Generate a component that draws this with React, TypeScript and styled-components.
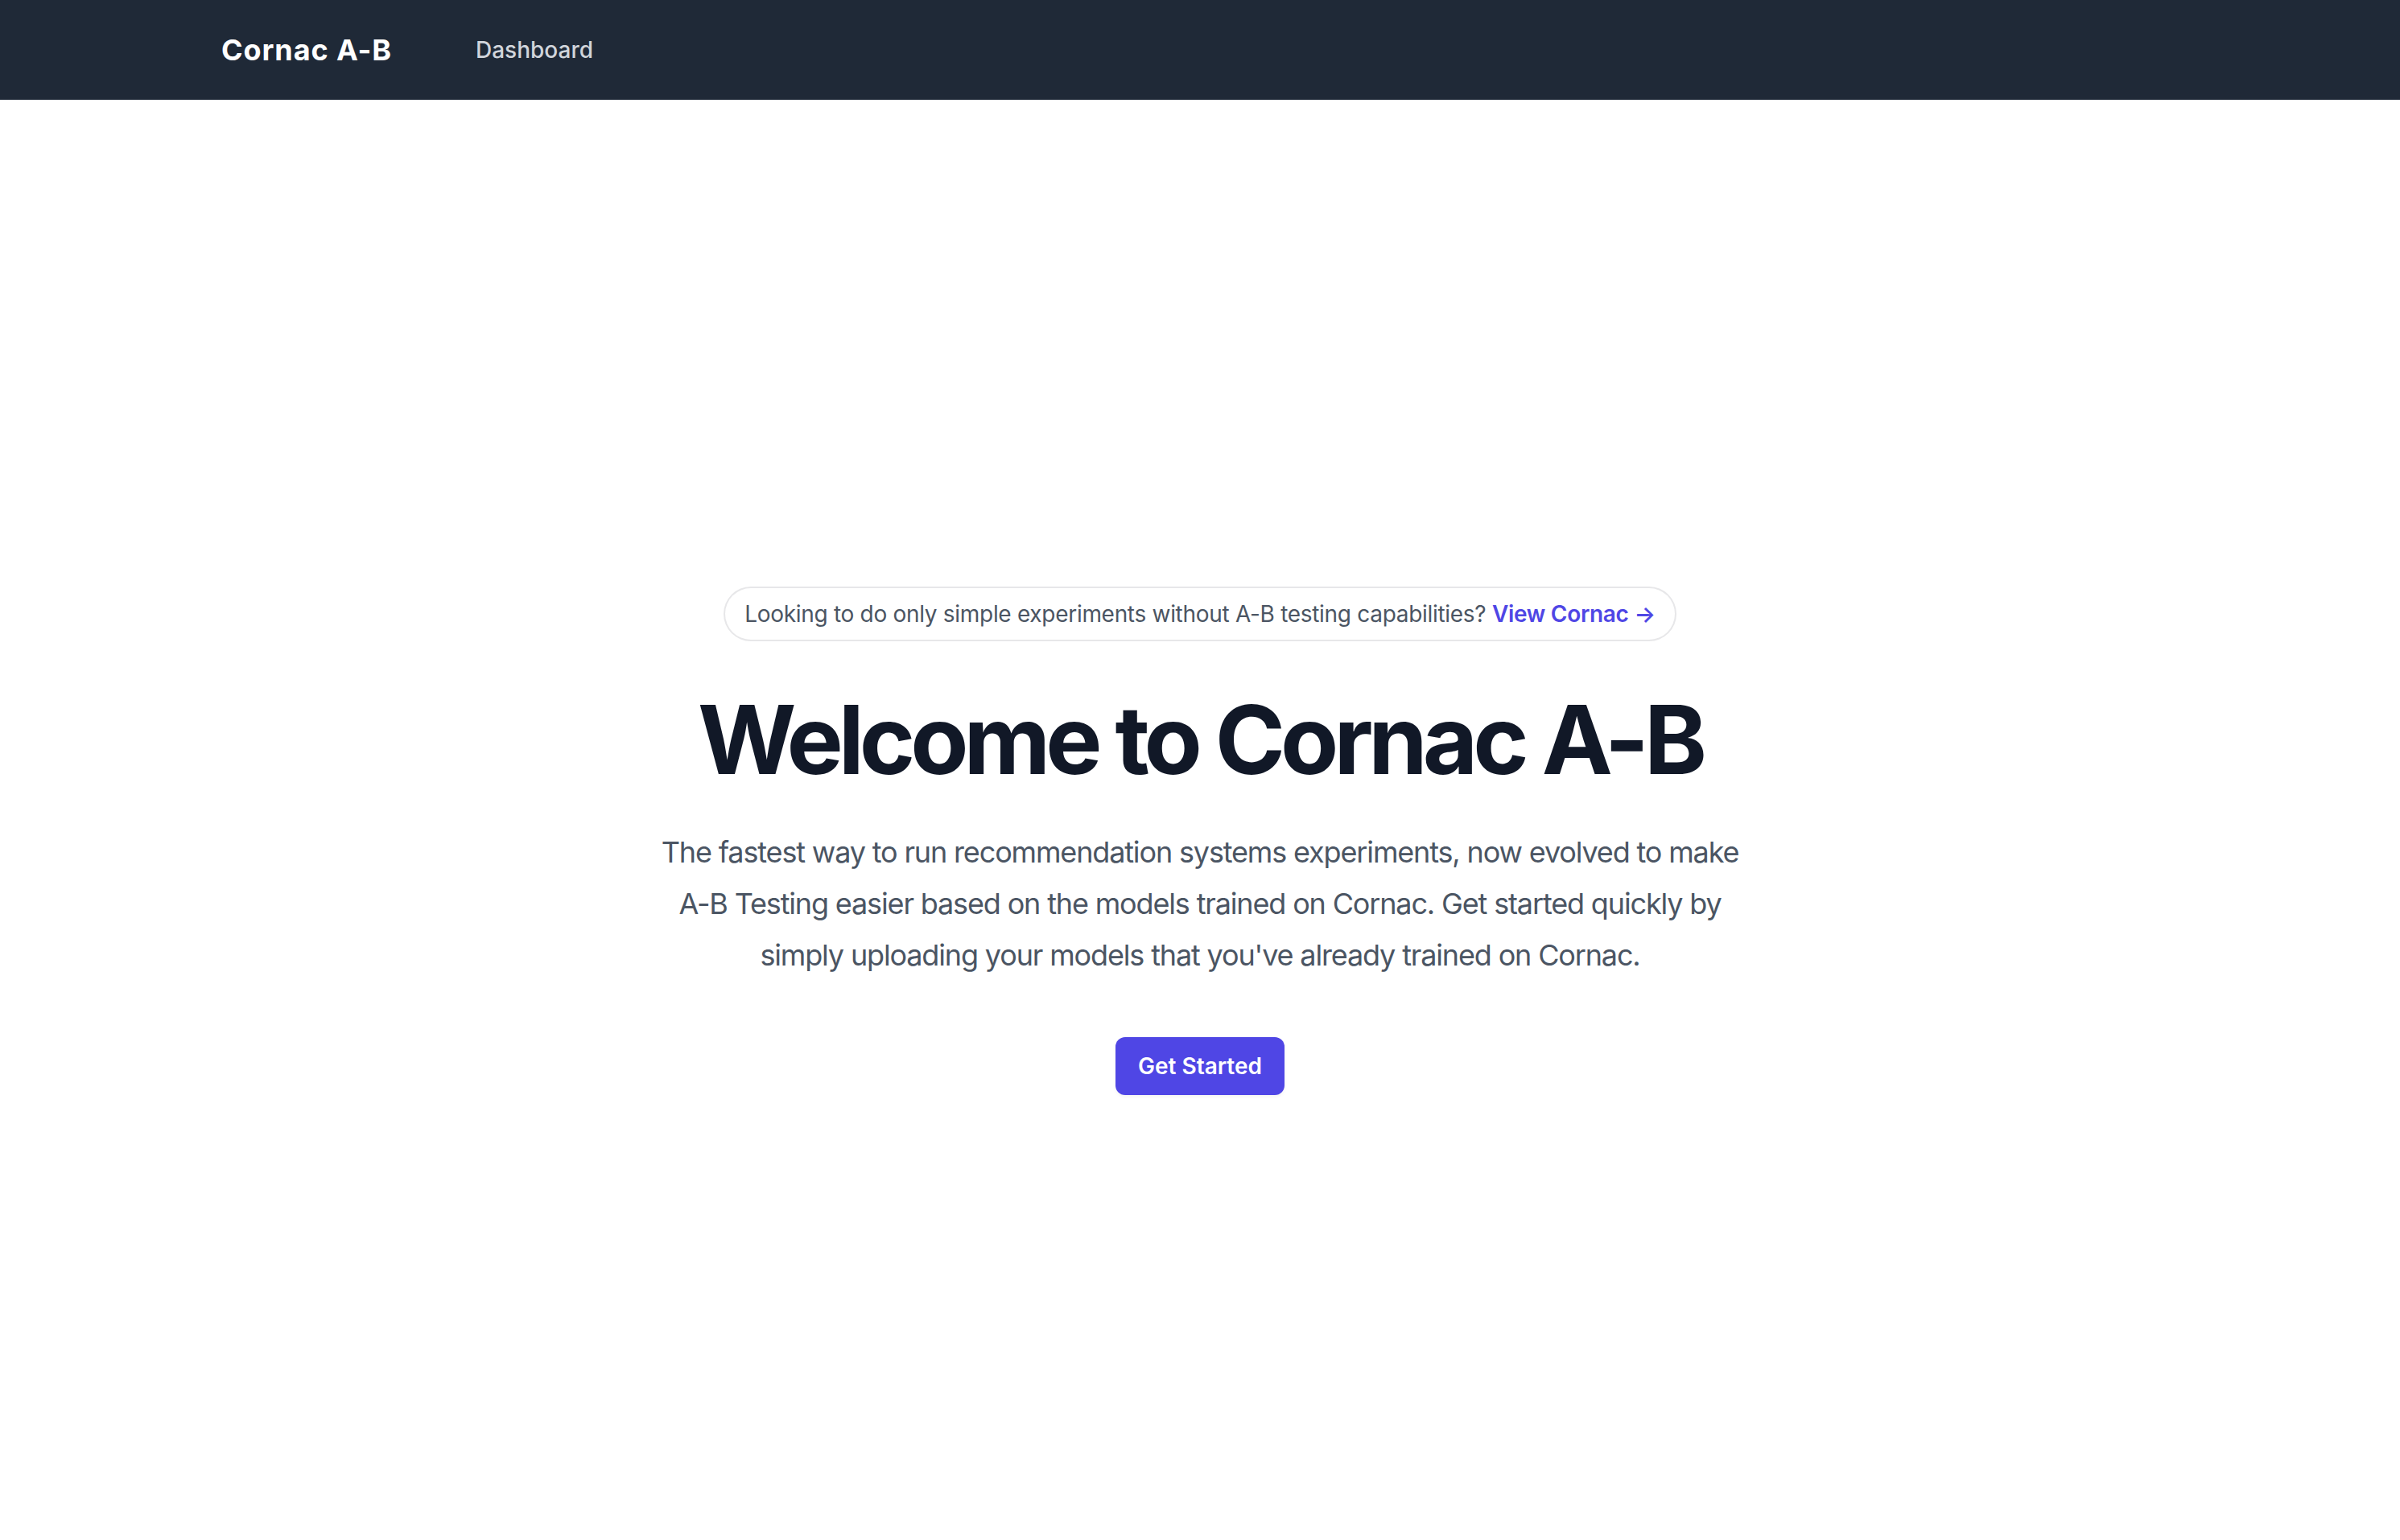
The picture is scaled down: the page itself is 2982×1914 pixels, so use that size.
import React from "react";
import styled, { createGlobalStyle } from "styled-components";

const GlobalStyle = createGlobalStyle`
  *, *::before, *::after { box-sizing: border-box; }
  html, body { margin: 0; padding: 0; background: #ffffff; }
  body {
    font-family: Inter, "Noto Sans", "Liberation Sans", sans-serif;
    -webkit-font-smoothing: antialiased;
  }
`;

const Page = styled.div`
  min-height: 1914px;
  background: #ffffff;
`;

const NavBar = styled.nav`
  background: #1f2937;
  height: 124px;
`;

const NavInner = styled.div`
  max-width: 2560px;
  margin: 0 auto;
  padding: 0 64px;
  height: 100%;
  display: flex;
  align-items: center;
`;

const Brand = styled.a`
  color: #ffffff;
  font-size: 36px;
  font-weight: 700;
  line-height: 56px;
  letter-spacing: 0.9px;
  text-decoration: none;
`;

const NavLinks = styled.div`
  margin-left: 80px;
  display: flex;
  align-items: center;
  gap: 32px;
`;

const NavLink = styled.a`
  color: #d1d5db;
  font-size: 28px;
  font-weight: 500;
  line-height: 40px;
  padding: 16px 24px;
  border-radius: 12px;
  text-decoration: none;
`;

const Hero = styled.main`
  padding: 607px 48px 0;
  display: flex;
  justify-content: center;
`;

const HeroContent = styled.div`
  width: 100%;
  max-width: 1356px;
  display: flex;
  flex-direction: column;
  align-items: center;
  text-align: center;
`;

const Announcement = styled.div`
  border-radius: 9999px;
  padding: 8px 24px;
  font-size: 28px;
  line-height: 48px;
  letter-spacing: -0.3px;
  color: #4b5563;
  box-shadow: 0 0 0 2px rgba(17, 24, 39, 0.1);
  margin-bottom: 64px;
  white-space: nowrap;
`;

const AnnouncementLink = styled.a`
  font-weight: 600;
  color: #4f46e5;
  text-decoration: none;
`;

const Title = styled.h1`
  margin: 0;
  font-size: 118px;
  line-height: 120px;
  font-weight: 700;
  letter-spacing: -6px;
  color: #111827;
  white-space: nowrap;
`;

const Lead = styled.p`
  margin: 48px 0 0;
  font-size: 36px;
  line-height: 64px;
  letter-spacing: -1.15px;
  color: #4b5563;
`;

const Actions = styled.div`
  margin-top: 70px;
  display: flex;
  align-items: center;
  justify-content: center;
  gap: 48px;
`;

const PrimaryButton = styled.a`
  display: inline-block;
  background: #4f46e5;
  color: #ffffff;
  font-size: 28px;
  font-weight: 600;
  line-height: 40px;
  padding: 16px 28px;
  border-radius: 12px;
  box-shadow: 0 2px 4px rgba(0, 0, 0, 0.05);
  text-decoration: none;
`;

export default function App() {
  return (
    <>
      <GlobalStyle />
      <Page>
        <NavBar>
          <NavInner>
            <Brand href="#">Cornac A-B</Brand>
            <NavLinks>
              <NavLink href="#">Dashboard</NavLink>
            </NavLinks>
          </NavInner>
        </NavBar>
        <Hero>
          <HeroContent>
            <Announcement>
              Looking to do only simple experiments without A-B testing capabilities?{" "}
              <AnnouncementLink href="#">
                View Cornac <span aria-hidden="true">&rarr;</span>
              </AnnouncementLink>
            </Announcement>
            <Title>Welcome to Cornac A-B</Title>
            <Lead>
              The fastest way to run recommendation systems experiments, now evolved to make
              A-B Testing easier based on the models trained on Cornac. Get started quickly by
              simply uploading your models that you've already trained on Cornac.
            </Lead>
            <Actions>
              <PrimaryButton href="#">Get Started</PrimaryButton>
            </Actions>
          </HeroContent>
        </Hero>
      </Page>
    </>
  );
}
